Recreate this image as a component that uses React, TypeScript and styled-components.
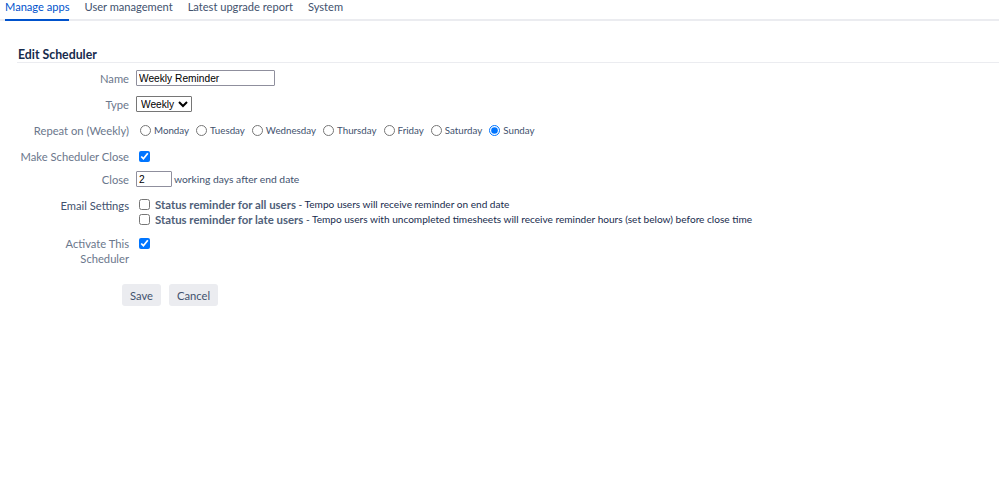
import React from "react";
import styled, { createGlobalStyle } from "styled-components";

const GlobalStyle = createGlobalStyle`
  html, body {
    margin: 0;
    padding: 0;
    background: #ffffff;
  }
  body {
    font-family: Lato, "Noto Sans", sans-serif;
    color: #172b4d;
  }
`;

const days = ["Monday", "Tuesday", "Wednesday", "Thursday", "Friday", "Saturday", "Sunday"];
const tabs = ["Manage apps", "User management", "Latest upgrade report", "System"];

export default function App() {
  return (
    <>
      <GlobalStyle />
      <TabBar>
        {tabs.map((t, i) => (
          <Tab key={t} $active={i === 0}>
            {t}
          </Tab>
        ))}
      </TabBar>

      <Section>
        <Heading>Edit Scheduler</Heading>

        <Row $top={7}>
          <Label>Name</Label>
          <Field>
            <TextInput type="text" defaultValue="Weekly Reminder" $width={139} />
          </Field>
        </Row>

        <Row>
          <Label>Type</Label>
          <Field>
            <Select defaultValue="Weekly">
              <option>Daily</option>
              <option>Weekly</option>
              <option>Monthly</option>
            </Select>
          </Field>
        </Row>

        <Row>
          <Label>Repeat on (Weekly)</Label>
          <Field>
            {days.map((d) => (
              <Choice key={d} $small>
                <Radio type="radio" name="day" defaultChecked={d === "Sunday"} />
                {d}
              </Choice>
            ))}
          </Field>
        </Row>

        <Row>
          <Label>Make Scheduler Close</Label>
          <Field>
            <Check type="checkbox" defaultChecked />
          </Field>
        </Row>

        <Row $top={7}>
          <Label>Close</Label>
          <Field>
            <TextInput type="text" defaultValue="2" $width={36} />
            <Suffix>working days after end date</Suffix>
          </Field>
        </Row>

        <Row>
          <Label $dark>Email Settings</Label>
          <Stack>
            <Choice>
              <Check type="checkbox" />
              <Strong>Status reminder for all users</Strong>
              <Note> - Tempo users will receive reminder on end date</Note>
            </Choice>
            <Choice>
              <Check type="checkbox" />
              <Strong>Status reminder for late users</Strong>
              <Note>
                {" "}
                - Tempo users with uncompleted timesheets will receive reminder hours (set below) before close time
              </Note>
            </Choice>
          </Stack>
        </Row>

        <Row $top={8}>
          <Label>Activate This Scheduler</Label>
          <Field>
            <Check type="checkbox" defaultChecked />
          </Field>
        </Row>

        <Buttons>
          <Button>Save</Button>
          <Button>Cancel</Button>
        </Buttons>
      </Section>
    </>
  );
}

const TabBar = styled.div`
  display: flex;
  gap: 15px;
  padding-left: 5px;
  border-bottom: 2px solid #ebecf0;
  font-size: 11.1px;
`;

const Tab = styled.div<{ $active?: boolean }>`
  line-height: 14px;
  padding-bottom: 5px;
  margin-bottom: -2px;
  border-bottom: 2px solid ${(p) => (p.$active ? "#0052cc" : "transparent")};
  color: ${(p) => (p.$active ? "#0052cc" : "#42526e")};
  cursor: pointer;
`;

const Section = styled.div`
  margin-left: 17px;
  padding-top: 26px;
`;

const Heading = styled.h2`
  margin: 0;
  font-size: 12.3px;
  font-weight: 700;
  line-height: 15px;
  padding-left: 1px;
  border-bottom: 1px solid #ebecf0;
  color: #172b4d;
`;

const Row = styled.div<{ $top?: number }>`
  display: flex;
  align-items: flex-start;
  gap: 7px;
  margin-top: ${(p) => p.$top ?? 10}px;
  font-size: 11.2px;
  line-height: 15px;
`;

const Label = styled.div<{ $dark?: boolean }>`
  width: 112px;
  flex: none;
  text-align: right;
  color: ${(p) => (p.$dark ? "#42526e" : "#6b778c")};
  padding-top: 1px;
`;

const Field = styled.div`
  display: flex;
  align-items: center;
  min-height: 16px;
  flex-wrap: wrap;
`;

const Stack = styled.div`
  display: flex;
  flex-direction: column;
`;

const TextInput = styled.input<{ $width: number }>`
  box-sizing: border-box;
  width: ${(p) => p.$width}px;
  height: 16px;
  padding: 0 2px;
  font-family: "Liberation Sans", Arial, sans-serif;
  font-size: 10.2px;
  color: #000;
  border: 1px solid #8f8f9d;
  border-radius: 1px;
`;

const Select = styled.select`
  box-sizing: border-box;
  width: 56px;
  height: 16px;
  font-family: "Liberation Sans", Arial, sans-serif;
  font-size: 10.2px;
  color: #000;
  padding: 0;
  border: 1px solid #767676;
  border-radius: 1px;
  background: #fff;
`;

const Choice = styled.label<{ $small?: boolean }>`
  display: inline-flex;
  align-items: center;
  margin-right: ${(p) => (p.$small ? 3 : 0)}px;
  color: #42526e;
  white-space: nowrap;
  font-size: ${(p) => (p.$small ? "9.75px" : "inherit")};
`;

const Radio = styled.input`
  width: 11px;
  height: 11px;
  margin: 0 3px 0 4px;
`;

const Check = styled.input`
  width: 11px;
  height: 11px;
  margin: 0 5px 0 3px;
`;

const Suffix = styled.span`
  margin-left: 2px;
  font-size: 10.3px;
  color: #42526e;
`;

const Strong = styled.span`
  font-weight: 700;
  font-size: 11.4px;
  color: #505f79;
`;

const Note = styled.span`
  font-size: 10.1px;
  color: #172b4d;
  white-space: pre;
`;

const Buttons = styled.div`
  display: flex;
  gap: 8px;
  margin-top: 18px;
  margin-left: 105px;
`;

const Button = styled.button`
  height: 22px;
  padding: 0 8px;
  border: none;
  border-radius: 3px;
  background: #ebecf0;
  color: #42526e;
  font-family: Lato, "Noto Sans", sans-serif;
  font-size: 11.2px;
  cursor: pointer;
`;
